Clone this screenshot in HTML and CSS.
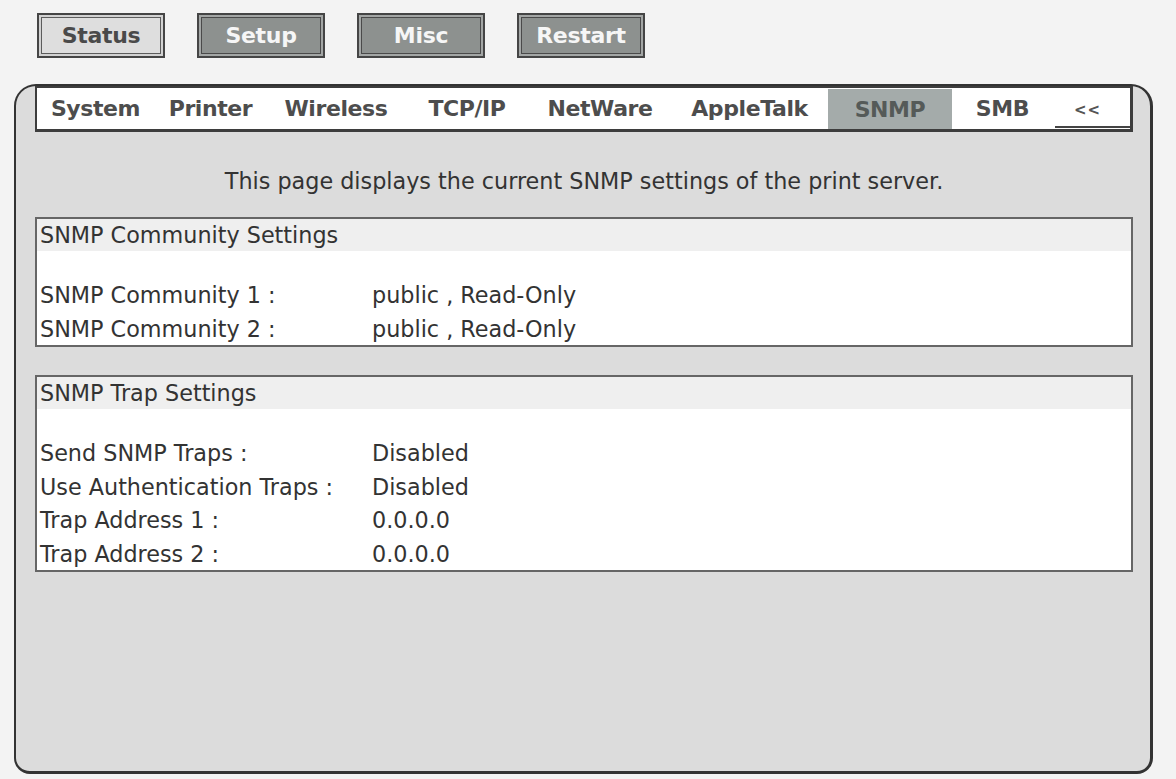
FILE: index.html
```html
<!DOCTYPE html>
<html>
<head>
<meta charset="utf-8">
<title>SNMP</title>
<link rel="stylesheet" href="styles.css">
</head>
<body>
<div class="topnav">
  <div class="btn btn-light">Status</div>
  <div class="btn btn-dark">Setup</div>
  <div class="btn btn-dark">Misc</div>
  <div class="btn btn-dark">Restart</div>
</div>
<div class="panel">
  <div class="tabs">
    <div class="tab">System</div>
    <div class="tab">Printer</div>
    <div class="tab">Wireless</div>
    <div class="tab">TCP/IP</div>
    <div class="tab">NetWare</div>
    <div class="tab">AppleTalk</div>
    <div class="tab tab-active">SNMP</div>
    <div class="tab">SMB</div>
    <div class="tab tab-more">&lt;&lt;</div>
  </div>
  <p class="intro">This page displays the current SNMP settings of the print server.</p>
  <div class="box">
    <div class="box-head">SNMP Community Settings</div>
    <div class="box-blank"></div>
    <div class="row"><span class="lbl">SNMP Community 1 :</span><span>public , Read-Only</span></div>
    <div class="row"><span class="lbl">SNMP Community 2 :</span><span>public , Read-Only</span></div>
  </div>
  <div class="box">
    <div class="box-head">SNMP Trap Settings</div>
    <div class="box-blank"></div>
    <div class="row"><span class="lbl">Send SNMP Traps :</span><span>Disabled</span></div>
    <div class="row"><span class="lbl">Use Authentication Traps :</span><span>Disabled</span></div>
    <div class="row"><span class="lbl">Trap Address 1 :</span><span>0.0.0.0</span></div>
    <div class="row"><span class="lbl">Trap Address 2 :</span><span>0.0.0.0</span></div>
  </div>
</div>
</body>
</html>
```
FILE: styles.css
```css
html, body {
  margin: 0;
  padding: 0;
  background: #f3f3f3;
  font-family: "DejaVu Sans", Verdana, sans-serif;
  color: #333;
}

.topnav {
  display: flex;
  gap: 32px;
  padding: 13px 0 0 37px;
  height: 45px;
}

.btn {
  box-sizing: border-box;
  width: 128px;
  height: 45px;
  border: 2px solid #454545;
  display: flex;
  align-items: center;
  justify-content: center;
  font-weight: bold;
  font-size: 22px;
  letter-spacing: -0.3px;
}

.btn-light {
  background: #dedede;
  color: #4a4a4a;
  box-shadow: inset 0 0 0 2px #d2d2d2, inset 0 0 0 3px #5c5c5c;
}

.btn-dark {
  background: #8d918f;
  color: #f6f6f6;
  box-shadow: inset 0 0 0 2px #a3a6a5, inset 0 0 0 3px #4a4a4a;
}

.panel {
  box-sizing: border-box;
  margin: 26px 0 0 14px;
  width: 1139px;
  height: 690px;
  background: #dcdcdc;
  border-style: solid;
  border-color: #333;
  border-width: 2px 3px 3px 2px;
  border-radius: 22px 22px 16px 16px;
  padding: 0 17px 0 19px;
}

.tabs {
  display: grid;
  grid-template-columns: 117px 113px 138px 124px 142px 157px 124px 101px 1fr;
  height: 41px;
  background: #fff;
  border-style: solid;
  border-color: #3d3d3d;
  border-width: 2px 3px 3px 2px;
  font-weight: bold;
  font-size: 22px;
  color: #4d4d4d;
}

.tab {
  display: flex;
  align-items: center;
  justify-content: center;
  letter-spacing: -0.4px;
}

.tab-active {
  background: #a4abaa;
  color: #555a58;
  margin-top: 1px;
}

.tab-more {
  font-size: 15px;
  letter-spacing: 1px;
  margin: 0 0 1px 2px;
  border-bottom: 2px solid #444;
  padding: 6px 10px 0 0;
  color: #555;
}

.intro {
  margin: 34px 0 21px 0;
  line-height: 30px;
  text-align: center;
  font-size: 22.3px;
}

.box {
  border: 2px solid #666;
  background: #fff;
  font-size: 22.3px;
  margin-bottom: 28px;
}

.box-head {
  height: 32px;
  line-height: 33px;
  background: #efefef;
  padding-left: 3px;
}

.box-blank {
  height: 27px;
}

.row {
  display: flex;
  height: 33.5px;
  line-height: 35px;
  padding-left: 3px;
}

.lbl {
  width: 332px;
}
```
